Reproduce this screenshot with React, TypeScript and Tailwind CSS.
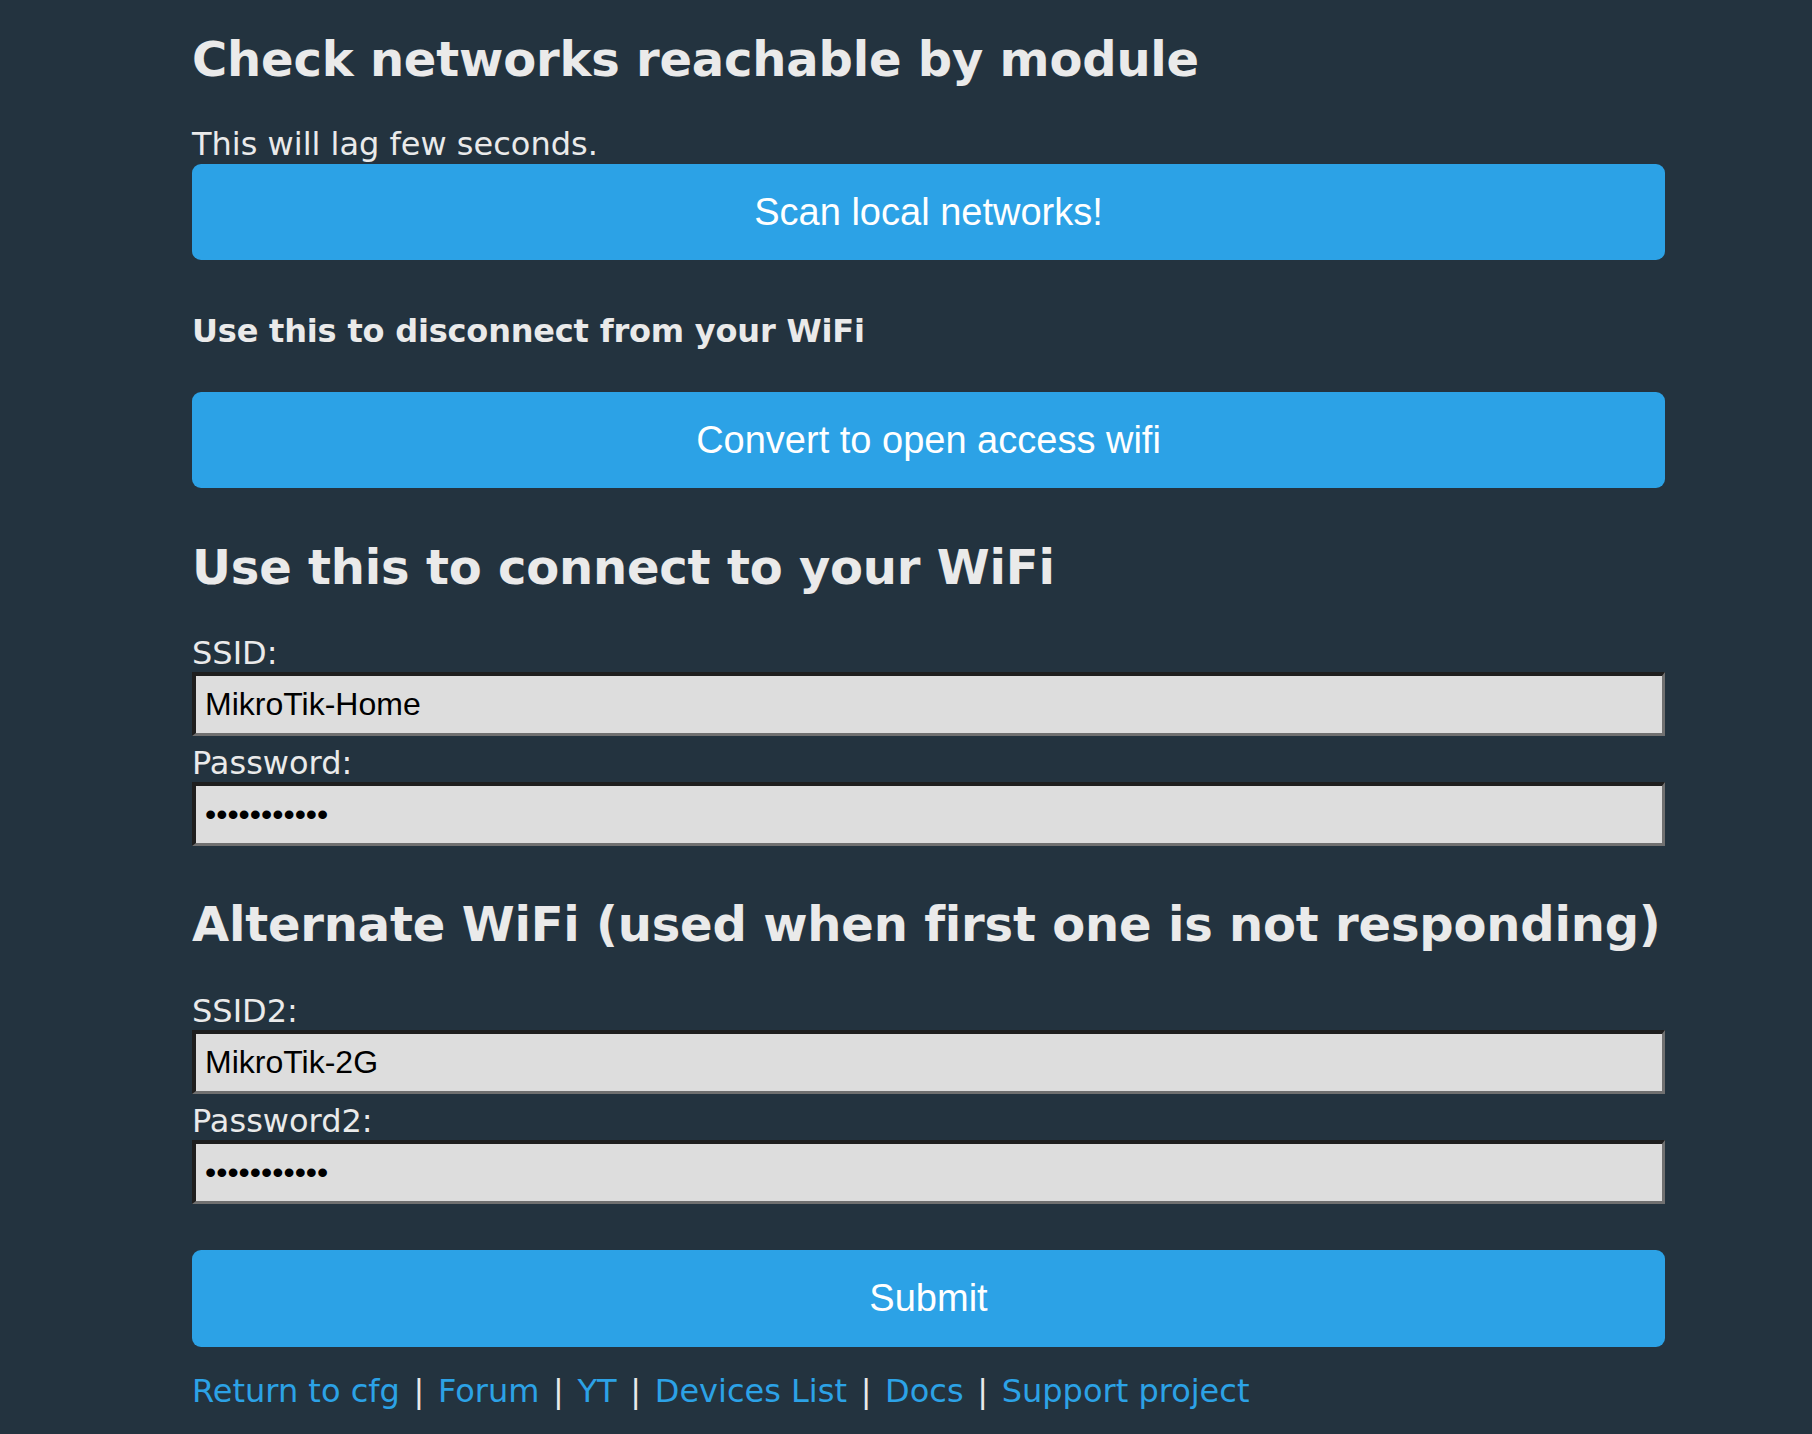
import React from 'react';

const textFont = "font-['DejaVu_Sans',Verdana,sans-serif] [font-variant-ligatures:none]";
const btnFont = "font-['Liberation_Sans',Arial,sans-serif]";
const headingCls = `text-[48px] leading-[56px] font-bold text-[#eaeaea] whitespace-nowrap tracking-[-0.004em] ${textFont}`;

interface FieldProps {
  label: string;
  value: string;
  type?: string;
  labelClass: string;
}

const Field: React.FC<FieldProps> = ({ label, value, type = 'text', labelClass }) => (
  <>
    <label className={`block text-[32px] leading-[37px] text-[#eaeaea] ${textFont} ${labelClass}`}>{label}</label>
    <input
      type={type}
      defaultValue={value}
      className={`block w-full h-[64px] bg-[#dddddd] text-black text-[32px] pl-[9px] border-solid border-t-4 border-l-4 border-b-[3px] border-r-[3px] border-t-[#1e1e1e] border-l-[#1e1e1e] border-b-[#707070] border-r-[#707070] outline-none ${btnFont}`}
    />
  </>
);

const BigButton: React.FC<{ label: string; className?: string }> = ({ label, className = '' }) => (
  <button
    className={`block w-full bg-[#2ca2e6] text-white text-[38px] rounded-[9px] ${btnFont} ${className}`}
  >
    {label}
  </button>
);

const links = ['Return to cfg', 'Forum', 'YT', 'Devices List', 'Docs', 'Support project'];

const App: React.FC = () => {
  return (
    <div className="min-h-screen bg-[#23333f] pl-[192px] overflow-hidden">
      <div className="w-[1473px] pb-[20px]">
        <h2 className={`pt-[31px] ${headingCls}`}>Check networks reachable by module</h2>
        <p className={`mt-[39px] text-[32px] leading-[37px] text-[#eaeaea] ${textFont}`}>This will lag few seconds.</p>
        <BigButton label="Scan local networks!" className="mt-[1px] h-[96px]" />

        <h4 className={`mt-[53px] text-[32px] leading-[37px] font-bold text-[#eaeaea] tracking-[-0.006em] ${textFont}`}>
          Use this to disconnect from your WiFi
        </h4>
        <BigButton label="Convert to open access wifi" className="mt-[42px] h-[96px]" />

        <h2 className={`mt-[51px] ${headingCls}`}>Use this to connect to your WiFi</h2>
        <Field label="SSID:" value="MikroTik-Home" labelClass="mt-[40px]" />
        <Field label="Password:" value="mikrotikpwd" type="password" labelClass="mt-[9px]" />

        <h2 className={`mt-[50px] ${headingCls}`}>Alternate WiFi (used when first one is not responding)</h2>
        <Field label="SSID2:" value="MikroTik-2G" labelClass="mt-[41px]" />
        <Field label="Password2:" value="mikrotikpwd" type="password" labelClass="mt-[9px]" />

        <BigButton label="Submit" className="mt-[46px] h-[97px]" />

        <div className={`mt-[26px] text-[32px] leading-[37px] text-[#eaeaea] ${textFont}`}>
          {links.map((l, i) => (
            <React.Fragment key={l}>
              {i > 0 && <span className="px-[3.5px]"> | </span>}
              <a href="#" className="text-[#2ca2e6]">{l}</a>
            </React.Fragment>
          ))}
        </div>
      </div>
    </div>
  );
};

export default App;
